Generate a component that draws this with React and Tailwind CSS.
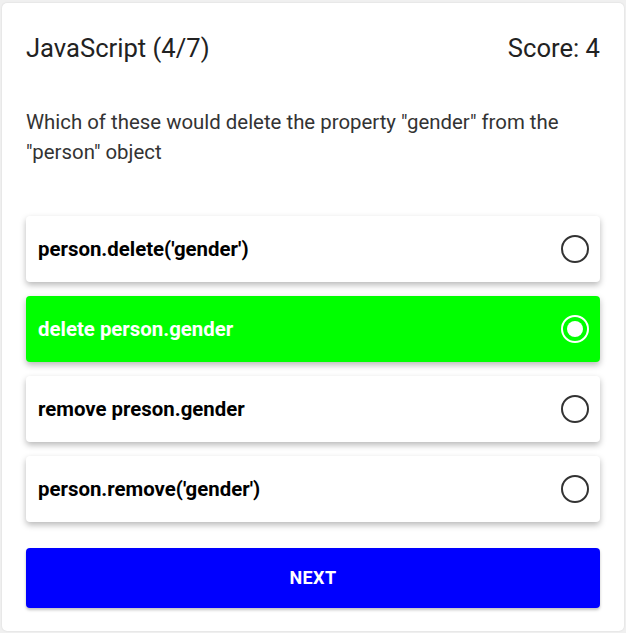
import React from "react";

const options = [
  { text: "person.delete('gender')", selected: false },
  { text: "delete person.gender", selected: true },
  { text: "remove preson.gender", selected: false },
  { text: "person.remove('gender')", selected: false },
];

function Radio({ selected }) {
  if (selected) {
    return (
      <div className="w-[28px] h-[28px] rounded-full border-2 border-white flex items-center justify-center">
        <div className="w-[16px] h-[16px] rounded-full bg-white" />
      </div>
    );
  }
  return <div className="w-[28px] h-[28px] rounded-full border-2 border-[#333]" />;
}

export default function App() {
  return (
    <div className="w-[626px] h-[633px] bg-[#f0f0f0] pt-[3px] px-[2px] pb-[2px]" style={{ fontFamily: "Roboto, 'Liberation Sans', sans-serif" }}>
      <div className="h-full bg-white rounded-[5px] shadow-[0_0_2px_rgba(0,0,0,0.12)] px-[24px] pt-[24px] pb-[23px] flex flex-col">
        <div className="flex items-center justify-between h-[42px] text-[25.6px] text-[#222]">
          <span>JavaScript (4/7)</span>
          <span>Score: 4</span>
        </div>
        <p className="mt-[38px] text-[20.4px] leading-[30px] text-[#333]">
          Which of these would delete the property "gender" from the "person" object
        </p>
        <div className="mt-[49px] flex flex-col gap-[14px]">
          {options.map((o, i) => (
            <div
              key={i}
              className={
                "h-[66px] rounded-[4px] flex items-center justify-between pl-[12px] pr-[11px] shadow-[0_3px_6px_rgba(0,0,0,0.28)] " +
                (o.selected ? "bg-[#00ff00] text-white" : "bg-white text-black")
              }
            >
              <span className="text-[20.4px] font-bold">{o.text}</span>
              <Radio selected={o.selected} />
            </div>
          ))}
        </div>
        <button className="mt-[26px] h-[60px] w-full rounded-[4px] bg-[#0000ff] text-white text-[18px] leading-[58px] tracking-[0.02em] font-bold shadow-[0_2px_3px_rgba(0,0,0,0.25)]">
          NEXT
        </button>
      </div>
    </div>
  );
}
